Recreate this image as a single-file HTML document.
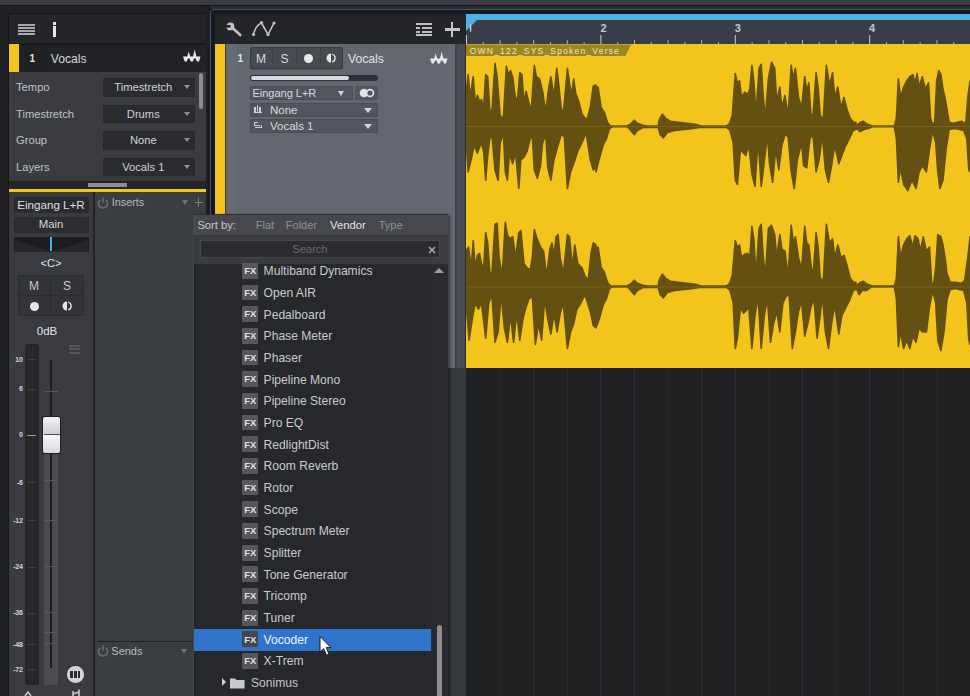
<!DOCTYPE html>
<html><head><meta charset="utf-8">
<style>
*{margin:0;padding:0;box-sizing:border-box}
html,body{width:970px;height:696px;overflow:hidden;background:#202124;font-family:"Liberation Sans",sans-serif;color:#d0d2d6}
.a{position:absolute}
.t{position:absolute;white-space:nowrap;line-height:1}
</style></head><body>
<div class="a" style="left:0px;top:0px;width:970px;height:5px;background:#3b3c41;"></div>
<div class="a" style="left:9px;top:14px;width:197px;height:682px;background:#3a3c41;box-shadow:0 0 0 1px #151618"></div>
<div class="a" style="left:9px;top:14px;width:197px;height:30px;background:#232528;"></div>
<div class="a" style="left:9px;top:43px;width:197px;height:2px;background:#18191b;"></div>
<div class="a" style="left:9px;top:45px;width:197px;height:27px;background:#222326;"></div>
<div class="a" style="left:19px;top:45px;width:28px;height:27px;background:#1f2022;"></div>
<div class="a" style="left:9px;top:44px;width:10px;height:28px;background:#f2c41c;"></div>
<div class="a" style="left:18px;top:24.0px;width:17px;height:2px;background:#a6a8ac;"></div>
<div class="a" style="left:18px;top:27.1px;width:17px;height:2px;background:#a6a8ac;"></div>
<div class="a" style="left:18px;top:30.2px;width:17px;height:2px;background:#a6a8ac;"></div>
<div class="a" style="left:18px;top:33.3px;width:17px;height:2px;background:#a6a8ac;"></div>
<div class="a" style="left:52.5px;top:22px;width:3px;height:2.5px;background:#e6e7ea;"></div>
<div class="a" style="left:52.5px;top:25.5px;width:3px;height:11px;background:#e6e7ea;"></div>
<div class="t" style="left:29.5px;top:53.7px;font-size:10px;color:#e2e4e8;font-weight:bold">1</div>
<div class="t" style="left:50.7px;top:53.14px;font-size:12.2px;color:#d4d6db;">Vocals</div>
<svg class="a" style="left:0;top:0" width="210" height="70" viewBox="0 0 210 70"><g transform="translate(-247,-2)" fill="#e8e9ec"><path d="M430,58.5 L434.2,58.5 L435.7,53.5 L437.2,58.5 L440,58.5 L441.7,51.5 L443.4,58.5 L447.5,58.5 L446,63.4 L444,63.4 L442.6,60.6 L441,60.6 L440,63.5 L437.6,63.5 L436.6,60.6 L435,60.6 L433.8,63.4 L431.7,63.4 Z"/></g></svg>
<div class="t" style="left:16px;top:81.82px;font-size:11.2px;color:#c0c2c7;">Tempo</div>
<div class="a" style="left:103px;top:78px;width:92px;height:18.5px;background:#2a2b2e;border-radius:2px;box-shadow:inset 0 0 0 1px #27282b"></div>
<div class="t" style="left:43.30000000000001px;width:200px;text-align:center;top:81.82px;font-size:11.2px;color:#cfd1d5;">Timestretch</div>
<div class="a" style="left:184px;top:85.0px;width:0;height:0;border-left:3.9px solid transparent;border-right:3.9px solid transparent;border-top:4.6px solid #909296"></div>
<div class="t" style="left:16px;top:108.52px;font-size:11.2px;color:#c0c2c7;">Timestretch</div>
<div class="a" style="left:103px;top:104.7px;width:92px;height:18.5px;background:#2a2b2e;border-radius:2px;box-shadow:inset 0 0 0 1px #27282b"></div>
<div class="t" style="left:43.30000000000001px;width:200px;text-align:center;top:108.52px;font-size:11.2px;color:#cfd1d5;">Drums</div>
<div class="a" style="left:184px;top:111.7px;width:0;height:0;border-left:3.9px solid transparent;border-right:3.9px solid transparent;border-top:4.6px solid #909296"></div>
<div class="t" style="left:16px;top:135.22px;font-size:11.2px;color:#c0c2c7;">Group</div>
<div class="a" style="left:103px;top:131.4px;width:92px;height:18.5px;background:#2a2b2e;border-radius:2px;box-shadow:inset 0 0 0 1px #27282b"></div>
<div class="t" style="left:43.30000000000001px;width:200px;text-align:center;top:135.22px;font-size:11.2px;color:#cfd1d5;">None</div>
<div class="a" style="left:184px;top:138.4px;width:0;height:0;border-left:3.9px solid transparent;border-right:3.9px solid transparent;border-top:4.6px solid #909296"></div>
<div class="t" style="left:16px;top:161.82px;font-size:11.2px;color:#c0c2c7;">Layers</div>
<div class="a" style="left:103px;top:158px;width:92px;height:18.5px;background:#2a2b2e;border-radius:2px;box-shadow:inset 0 0 0 1px #27282b"></div>
<div class="t" style="left:43.30000000000001px;width:200px;text-align:center;top:161.82px;font-size:11.2px;color:#cfd1d5;">Vocals 1</div>
<div class="a" style="left:184px;top:165.0px;width:0;height:0;border-left:3.9px solid transparent;border-right:3.9px solid transparent;border-top:4.6px solid #909296"></div>
<div class="a" style="left:199px;top:73px;width:4px;height:36px;background:#8c8e92;border-radius:2px"></div>
<div class="a" style="left:9px;top:176px;width:197px;height:5px;background:#37393e;"></div>
<div class="a" style="left:9px;top:181px;width:197px;height:8px;background:#232528;"></div>
<div class="a" style="left:88px;top:183px;width:39px;height:4px;background:#8b8e8e;"></div>
<div class="a" style="left:9px;top:189px;width:197px;height:3px;background:#f2c41c;"></div>
<div class="a" style="left:9px;top:192px;width:84px;height:504px;background:#393b40;"></div>
<div class="a" style="left:93px;top:192px;width:2px;height:504px;background:#232427;"></div>
<div class="a" style="left:95px;top:192px;width:111px;height:504px;background:#3a3e43;"></div>
<svg class="a" style="left:96px;top:196px" width="14" height="14" viewBox="0 0 14 14"><path d="M4.2,3.8 A4.6,4.6 0 1 0 9.8,3.8" fill="none" stroke="#6e7075" stroke-width="1.5"/><rect x="6.25" y="1.5" width="1.5" height="5" fill="#6e7075"/></svg>
<div class="t" style="left:111.8px;top:197.32px;font-size:10.8px;color:#b7b9be;">Inserts</div>
<div class="a" style="left:181.5px;top:200px;width:0;height:0;border-left:3.7px solid transparent;border-right:3.7px solid transparent;border-top:5.5px solid #6e7075"></div>
<div class="a" style="left:194.5px;top:201.5px;width:8px;height:1.6px;background:#7b7d82;"></div>
<div class="a" style="left:197.7px;top:198px;width:1.6px;height:8.5px;background:#7b7d82;"></div>
<div class="a" style="left:95px;top:641px;width:111px;height:1px;background:#222326;"></div>
<svg class="a" style="left:96px;top:644px" width="14" height="14" viewBox="0 0 14 14"><path d="M4.2,3.8 A4.6,4.6 0 1 0 9.8,3.8" fill="none" stroke="#6e7075" stroke-width="1.5"/><rect x="6.25" y="1.5" width="1.5" height="5" fill="#6e7075"/></svg>
<div class="t" style="left:111.3px;top:645.52px;font-size:11px;color:#b7b9be;">Sends</div>
<div class="a" style="left:181.3px;top:648.5px;width:0;height:0;border-left:3.7px solid transparent;border-right:3.7px solid transparent;border-top:5.5px solid #6e7075"></div>
<div class="a" style="left:13.5px;top:197.3px;width:75px;height:15.3px;background:#2a2b2e;border-radius:2px"></div>
<div class="t" style="left:-49px;width:200px;text-align:center;top:199.43px;font-size:11.6px;color:#dde0e4;">Eingang L+R</div>
<div class="a" style="left:13.5px;top:217px;width:75px;height:15.5px;background:#2c2d30;border-radius:2px"></div>
<div class="t" style="left:-49px;width:200px;text-align:center;top:219.23px;font-size:11.4px;color:#d4d6da;">Main</div>
<div class="a" style="left:13.5px;top:237px;width:75px;height:15px;background:#1b1c1e;border-radius:2px;overflow:hidden"></div>
<svg class="a" style="left:13.5px;top:237px" width="75" height="15" viewBox="0 0 75 15"><path d="M1,3 L37.5,15 L1,15 Z M74,3 L37.5,15 L74,15 Z" fill="#252628"/></svg>
<div class="a" style="left:50px;top:237.4px;width:2.4px;height:13.6px;background:#41b0f0;"></div>
<div class="t" style="left:-49px;width:200px;text-align:center;top:258.12px;font-size:11px;color:#dfe6ee;">&lt;C&gt;</div>
<div class="a" style="left:18px;top:275.3px;width:66px;height:40.7px;background:#323438;border-radius:2px;box-shadow:inset 0 0 0 1px #2a2b2e"></div>
<div class="a" style="left:50px;top:275.3px;width:1px;height:40.7px;background:#2a2b2e;"></div>
<div class="a" style="left:18px;top:295.3px;width:66px;height:1px;background:#2a2b2e;"></div>
<div class="t" style="left:-66px;width:200px;text-align:center;top:280.04px;font-size:12px;color:#c8cacf;">M</div>
<div class="t" style="left:-33px;width:200px;text-align:center;top:280.04px;font-size:12px;color:#c8cacf;">S</div>
<div class="a" style="left:29.5px;top:301.5px;width:9px;height:9px;border-radius:50%;background:#e6e7ea"></div>
<svg class="a" style="left:61px;top:300px" width="12" height="12" viewBox="0 0 12 12"><path d="M6,1.5 A4.5,4.5 0 0 0 6,10.5 Z" fill="#e6e7ea"/><path d="M7.2,2 A4.2,4.2 0 0 1 7.2,10" fill="none" stroke="#e6e7ea" stroke-width="1.3"/></svg>
<div class="t" style="left:-53px;width:200px;text-align:center;top:325.88px;font-size:11.5px;color:#e0e3e8;">0dB</div>
<div class="a" style="left:24.8px;top:344.3px;width:14px;height:340.3px;background:#242527;border-radius:3px"></div>
<div class="a" style="left:28.5px;top:346px;width:0.6px;height:336px;background:#2b2c2e;"></div>
<div class="a" style="left:32px;top:346px;width:0.6px;height:336px;background:#2b2c2e;"></div>
<div class="a" style="left:35.5px;top:346px;width:0.6px;height:336px;background:#2b2c2e;"></div>
<div class="a" style="left:43.5px;top:453px;width:14.5px;height:231.6px;background:#4a4c50;border-radius:0 0 2px 2px"></div>
<div class="a" style="left:50.3px;top:359.8px;width:1.6px;height:308px;background:#1c1d1f;"></div>
<div class="a" style="left:44px;top:391px;width:13.5px;height:1px;background:#58595d;"></div>
<div class="a" style="left:44px;top:480px;width:13.5px;height:1px;background:#58595d;"></div>
<div class="a" style="left:44px;top:519.5px;width:13.5px;height:1px;background:#58595d;"></div>
<div class="a" style="left:44px;top:566px;width:13.5px;height:1px;background:#58595d;"></div>
<div class="a" style="left:44px;top:611.5px;width:13.5px;height:1px;background:#58595d;"></div>
<div class="a" style="left:44px;top:631.5px;width:13.5px;height:1px;background:#58595d;"></div>
<div class="a" style="left:44px;top:643px;width:13.5px;height:1px;background:#58595d;"></div>
<div class="t" style="left:-177.5px;width:200px;text-align:right;top:355.64px;font-size:7px;color:#d2d4d8;font-weight:bold;letter-spacing:-0.3px">10</div>
<div class="a" style="left:27px;top:359px;width:9px;height:1px;background:#3a3b3e;"></div>
<div class="t" style="left:-177.5px;width:200px;text-align:right;top:385.14px;font-size:7px;color:#d2d4d8;font-weight:bold;letter-spacing:-0.3px">6</div>
<div class="a" style="left:27px;top:388.5px;width:9px;height:1px;background:#3a3b3e;"></div>
<div class="t" style="left:-177.5px;width:200px;text-align:right;top:431.44px;font-size:7px;color:#d2d4d8;font-weight:bold;letter-spacing:-0.3px">0</div>
<div class="a" style="left:27px;top:434.8px;width:9px;height:1px;background:#9a9ca0;"></div>
<div class="t" style="left:-177.5px;width:200px;text-align:right;top:478.64px;font-size:7px;color:#d2d4d8;font-weight:bold;letter-spacing:-0.3px">-6</div>
<div class="a" style="left:27px;top:482px;width:9px;height:1px;background:#3a3b3e;"></div>
<div class="t" style="left:-177.5px;width:200px;text-align:right;top:516.64px;font-size:7px;color:#d2d4d8;font-weight:bold;letter-spacing:-0.3px">-12</div>
<div class="a" style="left:27px;top:520px;width:9px;height:1px;background:#3a3b3e;"></div>
<div class="t" style="left:-177.5px;width:200px;text-align:right;top:563.44px;font-size:7px;color:#d2d4d8;font-weight:bold;letter-spacing:-0.3px">-24</div>
<div class="a" style="left:27px;top:566.8px;width:9px;height:1px;background:#3a3b3e;"></div>
<div class="t" style="left:-177.5px;width:200px;text-align:right;top:609.34px;font-size:7px;color:#d2d4d8;font-weight:bold;letter-spacing:-0.3px">-36</div>
<div class="a" style="left:27px;top:612.7px;width:9px;height:1px;background:#3a3b3e;"></div>
<div class="t" style="left:-177.5px;width:200px;text-align:right;top:640.64px;font-size:7px;color:#d2d4d8;font-weight:bold;letter-spacing:-0.3px">-48</div>
<div class="a" style="left:27px;top:644px;width:9px;height:1px;background:#3a3b3e;"></div>
<div class="t" style="left:-177.5px;width:200px;text-align:right;top:665.64px;font-size:7px;color:#d2d4d8;font-weight:bold;letter-spacing:-0.3px">-72</div>
<div class="a" style="left:27px;top:669px;width:9px;height:1px;background:#3a3b3e;"></div>
<div class="a" style="left:42.9px;top:416.7px;width:17.3px;height:36.3px;border-radius:2px;background:linear-gradient(#f4f4f5,#cfd0d2 45%,#f7f7f8 50%,#d8d9db);box-shadow:0 0 0 1px #1e1f21"></div>
<div class="a" style="left:43.5px;top:434.3px;width:16px;height:1.2px;background:#4a4b4e;"></div>
<div class="a" style="left:69px;top:344.5px;width:11px;height:2.3px;background:#55575b;"></div>
<div class="a" style="left:69px;top:348.1px;width:11px;height:2.3px;background:#55575b;"></div>
<div class="a" style="left:69px;top:351.7px;width:11px;height:2.3px;background:#55575b;"></div>
<div class="a" style="left:67px;top:666px;width:16.5px;height:16.5px;border-radius:50%;background:#d3d4d6"></div>
<div class="a" style="left:70.3px;top:670.5px;width:2.6px;height:7.5px;background:#2a2b2e;"></div>
<div class="a" style="left:74px;top:670.5px;width:2.6px;height:7.5px;background:#2a2b2e;"></div>
<div class="a" style="left:77.7px;top:670.5px;width:2.6px;height:7.5px;background:#2a2b2e;"></div>
<svg class="a" style="left:20px;top:686px" width="70" height="10" viewBox="20 686 70 10"><path d="M25,696 L28,692 L31,696" fill="none" stroke="#c7c9cd" stroke-width="1.6"/><path d="M73,691 L73,696 M79,689.5 L79,696 M73,694 L79,692" fill="none" stroke="#c7c9cd" stroke-width="1.6"/></svg>
<div class="a" style="left:0px;top:4.5px;width:970px;height:1.5px;background:#141517;"></div>
<div class="a" style="left:206px;top:6px;width:764px;height:3px;background:#2b2c30;"></div>
<div class="a" style="left:206px;top:6px;width:4px;height:690px;background:#1e1f22;"></div>
<div class="a" style="left:210px;top:9px;width:780px;height:700px;border:1px solid #3f5670;border-radius:5px;background:#161a1f"></div>
<div class="a" style="left:215px;top:14px;width:251px;height:30px;background:#232528;"></div>
<div class="a" style="left:215px;top:44px;width:10px;height:324px;background:#f2c41c;"></div>
<div class="a" style="left:225px;top:44px;width:1px;height:324px;background:#3b3d40;"></div>
<div class="a" style="left:226px;top:44px;width:229px;height:324px;background:#62666e;"></div>
<div class="a" style="left:226px;top:44px;width:11px;height:324px;background:#666a72;"></div>
<div class="a" style="left:448px;top:44px;width:7px;height:324px;background:#666a73;"></div>
<div class="a" style="left:455px;top:44px;width:11px;height:324px;background:#484c54;"></div>
<div class="a" style="left:455px;top:44px;width:1.5px;height:324px;background:#3e4149;"></div>
<div class="a" style="left:465px;top:44px;width:1px;height:324px;background:#2b2d2a;"></div>
<div class="a" style="left:448px;top:368px;width:18px;height:328px;background:#35383c;"></div>
<svg class="a" style="left:224px;top:18px" width="60" height="24" viewBox="224 18 60 24"><path d="M232.5,28 L240.3,35" fill="none" stroke="#c0c2c6" stroke-width="2.6" stroke-linecap="round"/><circle cx="230.4" cy="26.4" r="3.9" fill="#c0c2c6"/><rect x="225.5" y="25" width="5" height="2.6" fill="#232528"/><path d="M253.5,34.5 Q255.5,25.5 261.5,23 L268,34.5 L274,23" fill="none" stroke="#c0c2c6" stroke-width="1.6"/><circle cx="253.5" cy="34.5" r="1.6" fill="#c0c2c6"/><circle cx="261.5" cy="22.5" r="1.6" fill="#c0c2c6"/><circle cx="268" cy="34.5" r="1.6" fill="#c0c2c6"/><circle cx="274" cy="23" r="1.6" fill="#c0c2c6"/></svg>
<div class="a" style="left:416px;top:22.5px;width:16px;height:2.4px;background:#bdbfc3;"></div>
<div class="a" style="left:416px;top:26.7px;width:4px;height:2.4px;background:#bdbfc3;"></div>
<div class="a" style="left:422px;top:26.7px;width:10px;height:2.4px;background:#bdbfc3;"></div>
<div class="a" style="left:416px;top:31px;width:4px;height:2.4px;background:#bdbfc3;"></div>
<div class="a" style="left:422px;top:31px;width:10px;height:2.4px;background:#bdbfc3;"></div>
<div class="a" style="left:416px;top:33.5px;width:16px;height:2.2px;background:#bdbfc3;"></div>
<div class="a" style="left:444.6px;top:28px;width:15px;height:2.6px;background:#c4c6ca;"></div>
<div class="a" style="left:450.8px;top:21.6px;width:2.6px;height:15.2px;background:#c4c6ca;"></div>
<div class="t" style="left:237.5px;top:53.7px;font-size:10px;color:#e2e4e8;font-weight:bold">1</div>
<div class="a" style="left:249.6px;top:47px;width:93.2px;height:22.4px;background:#474a50;border-radius:3px;box-shadow:inset 0 0 0 1px #3a3c41, 0 1px 0 #55585e"></div>
<div class="a" style="left:272px;top:48px;width:1px;height:20.4px;background:#3f4247;"></div>
<div class="a" style="left:296.4px;top:48px;width:1px;height:20.4px;background:#3f4247;"></div>
<div class="a" style="left:319.6px;top:48px;width:1px;height:20.4px;background:#3f4247;"></div>
<div class="t" style="left:161px;width:200px;text-align:center;top:52.74px;font-size:12px;color:#d7d9dd;">M</div>
<div class="t" style="left:184.5px;width:200px;text-align:center;top:52.74px;font-size:12px;color:#d7d9dd;">S</div>
<div class="a" style="left:303.5px;top:53.5px;width:9px;height:9px;border-radius:50%;background:#e8e9eb"></div>
<svg class="a" style="left:325px;top:52px" width="12" height="12" viewBox="0 0 12 12"><path d="M6,1.5 A4.5,4.5 0 0 0 6,10.5 Z" fill="#e8e9eb"/><path d="M7.2,2 A4.2,4.2 0 0 1 7.2,10" fill="none" stroke="#e8e9eb" stroke-width="1.3"/></svg>
<div class="t" style="left:348px;top:53.44px;font-size:12.2px;color:#e0e2e6;">Vocals</div>
<svg class="a" style="left:428px;top:50px" width="20" height="17" viewBox="428 50 20 17"><path fill="#e8e9ec" d="M430,58.5 L434.2,58.5 L435.7,53.5 L437.2,58.5 L440,58.5 L441.7,51.5 L443.4,58.5 L447.5,58.5 L446,63.4 L444,63.4 L442.6,60.6 L441,60.6 L440,63.5 L437.6,63.5 L436.6,60.6 L435,60.6 L433.8,63.4 L431.7,63.4 Z"/></svg>
<div class="a" style="left:249.6px;top:74.8px;width:128.4px;height:6.2px;background:#2e3034;border-radius:3px"></div>
<div class="a" style="left:250.5px;top:75.6px;width:98px;height:4.6px;background:#d8d9db;border-radius:2.5px"></div>
<div class="a" style="left:249.6px;top:85.6px;width:103.3px;height:14.4px;background:#52555b;border-radius:2px;box-shadow:inset 0 0 0 1px #4a4d52"></div>
<div class="t" style="left:252.4px;top:87.72px;font-size:11px;color:#d8dadd;">Eingang L+R</div>
<div class="a" style="left:338px;top:90.5px;width:0;height:0;border-left:3.7px solid transparent;border-right:3.7px solid transparent;border-top:5px solid #d0d2d5"></div>
<div class="a" style="left:355px;top:85.6px;width:23px;height:14.4px;background:#52555b;border-radius:2px"></div>
<svg class="a" style="left:357px;top:86px" width="20" height="14" viewBox="0 0 20 14"><circle cx="7" cy="7" r="4.3" fill="#e4e5e7"/><circle cx="13" cy="7" r="4.3" fill="#e4e5e7"/><circle cx="13" cy="7" r="2.6" fill="#52555b"/></svg>
<div class="a" style="left:249.6px;top:102.6px;width:128.4px;height:14.3px;background:#52555b;border-radius:2px;box-shadow:inset 0 0 0 1px #4a4d52"></div>
<div class="t" style="left:270px;top:104.58px;font-size:11.5px;color:#d8dadd;">None</div>
<div class="a" style="left:363.5px;top:107.6px;width:0;height:0;border-left:4px solid transparent;border-right:4px solid transparent;border-top:5px solid #d0d2d5"></div>
<div class="a" style="left:249.6px;top:118.9px;width:128.4px;height:14.3px;background:#52555b;border-radius:2px;box-shadow:inset 0 0 0 1px #4a4d52"></div>
<div class="t" style="left:270px;top:120.88px;font-size:11.5px;color:#d8dadd;">Vocals 1</div>
<div class="a" style="left:363.5px;top:123.9px;width:0;height:0;border-left:4px solid transparent;border-right:4px solid transparent;border-top:5px solid #d0d2d5"></div>
<div class="a" style="left:254px;top:106.5px;width:1.5px;height:6px;background:#cfd1d4;"></div>
<div class="a" style="left:256.5px;top:105px;width:1.5px;height:7.5px;background:#cfd1d4;"></div>
<div class="a" style="left:259px;top:107px;width:1.5px;height:5.5px;background:#cfd1d4;"></div>
<div class="a" style="left:253.5px;top:112px;width:8px;height:1px;background:#cfd1d4;"></div>
<div class="a" style="left:254px;top:121.5px;width:4px;height:1.2px;background:#cfd1d4;"></div>
<div class="a" style="left:254px;top:121.5px;width:1.2px;height:4px;background:#cfd1d4;"></div>
<div class="a" style="left:254px;top:124.5px;width:6px;height:1.2px;background:#cfd1d4;"></div>
<div class="a" style="left:255px;top:127px;width:7px;height:1.2px;background:#cfd1d4;"></div>
<div class="a" style="left:261px;top:125px;width:1.2px;height:3px;background:#cfd1d4;"></div>
<svg class="a" style="left:0;top:0" width="970" height="696" viewBox="0 0 970 696">
<defs><clipPath id="arrclip"><rect x="466" y="14" width="504" height="682"/></clipPath></defs>
<g clip-path="url(#arrclip)">
<rect x="466" y="14" width="504" height="682" fill="#1f2022"/>
<rect x="499.6" y="368" width="1" height="328" fill="#2c2e31"/><rect x="533.2" y="368" width="1" height="328" fill="#2c2e31"/><rect x="566.8" y="368" width="1" height="328" fill="#2c2e31"/><rect x="600.4" y="368" width="1" height="328" fill="#323438"/><rect x="634.0" y="368" width="1" height="328" fill="#2c2e31"/><rect x="667.6" y="368" width="1" height="328" fill="#2c2e31"/><rect x="701.2" y="368" width="1" height="328" fill="#2c2e31"/><rect x="734.8" y="368" width="1" height="328" fill="#323438"/><rect x="768.4" y="368" width="1" height="328" fill="#2c2e31"/><rect x="802.0" y="368" width="1" height="328" fill="#2c2e31"/><rect x="835.6" y="368" width="1" height="328" fill="#2c2e31"/><rect x="869.2" y="368" width="1" height="328" fill="#323438"/><rect x="902.8" y="368" width="1" height="328" fill="#2c2e31"/><rect x="936.4" y="368" width="1" height="328" fill="#2c2e31"/><rect x="970.0" y="368" width="1" height="328" fill="#2c2e31"/>
<rect x="466" y="20" width="504" height="24" fill="#393d47"/>
<path d="M466,14 L970,14 L970,20 L477,20 L466,31 Z" fill="#4db1ea"/>
<rect x="466.0" y="35" width="1" height="9" fill="#c8cad0"/><rect x="482.8" y="42" width="1" height="2" fill="#aeb1b8"/><rect x="499.6" y="40.2" width="1" height="3.8" fill="#aeb1b8"/><rect x="516.4" y="42" width="1" height="2" fill="#aeb1b8"/><rect x="533.2" y="40.2" width="1" height="3.8" fill="#aeb1b8"/><rect x="550.0" y="42" width="1" height="2" fill="#aeb1b8"/><rect x="566.8" y="40.2" width="1" height="3.8" fill="#aeb1b8"/><rect x="583.6" y="42" width="1" height="2" fill="#aeb1b8"/><rect x="600.4" y="35" width="1" height="9" fill="#c8cad0"/><rect x="617.2" y="42" width="1" height="2" fill="#aeb1b8"/><rect x="634.0" y="40.2" width="1" height="3.8" fill="#aeb1b8"/><rect x="650.8" y="42" width="1" height="2" fill="#aeb1b8"/><rect x="667.6" y="40.2" width="1" height="3.8" fill="#aeb1b8"/><rect x="684.4" y="42" width="1" height="2" fill="#aeb1b8"/><rect x="701.2" y="40.2" width="1" height="3.8" fill="#aeb1b8"/><rect x="718.0" y="42" width="1" height="2" fill="#aeb1b8"/><rect x="734.8" y="35" width="1" height="9" fill="#c8cad0"/><rect x="751.6" y="42" width="1" height="2" fill="#aeb1b8"/><rect x="768.4" y="40.2" width="1" height="3.8" fill="#aeb1b8"/><rect x="785.2" y="42" width="1" height="2" fill="#aeb1b8"/><rect x="802.0" y="40.2" width="1" height="3.8" fill="#aeb1b8"/><rect x="818.8" y="42" width="1" height="2" fill="#aeb1b8"/><rect x="835.6" y="40.2" width="1" height="3.8" fill="#aeb1b8"/><rect x="852.4" y="42" width="1" height="2" fill="#aeb1b8"/><rect x="869.2" y="35" width="1" height="9" fill="#c8cad0"/><rect x="886.0" y="42" width="1" height="2" fill="#aeb1b8"/><rect x="902.8" y="40.2" width="1" height="3.8" fill="#aeb1b8"/><rect x="919.6" y="42" width="1" height="2" fill="#aeb1b8"/><rect x="936.4" y="40.2" width="1" height="3.8" fill="#aeb1b8"/><rect x="953.2" y="42" width="1" height="2" fill="#aeb1b8"/><rect x="970.0" y="40.2" width="1" height="3.8" fill="#aeb1b8"/>
<rect x="469.8" y="24.4" width="1.5" height="7.2" fill="#c8cad0"/>
<text x="600.6" y="31.8" font-size="11" font-weight="bold" fill="#c4c7ce" font-family="Liberation Sans">2</text>
<text x="734.8" y="31.8" font-size="11" font-weight="bold" fill="#c4c7ce" font-family="Liberation Sans">3</text>
<text x="869" y="31.8" font-size="11" font-weight="bold" fill="#c4c7ce" font-family="Liberation Sans">4</text>
<rect x="466" y="44" width="504" height="324" fill="#f2c41c"/>
<path d="M466,44.6 L631.3,44.6 L625.2,56.1 L466,56.1 Z" fill="#9c8623"/>
<text x="469.8" y="54.2" font-size="8.5" letter-spacing="1.2" fill="#f2e6b8" font-family="Liberation Sans">OWN_122_SYS_Spoken_Verse</text>
<path id="wv" d="M466,126.5 L466.0,93.3 L468.1,74.6 L470.1,97.4 L473.2,76.7 L475.3,103.6 L477.4,95.3 L479.5,101.5 L481.5,99.5 L483.6,107.8 L485.7,74.6 L487.7,76.7 L489.8,109.8 L491.9,111.9 L495.0,63.2 L497.1,76.7 L500.2,116.0 L503.3,118.1 L506.4,66.4 L508.4,74.6 L510.5,70.5 L512.6,76.7 L515.7,99.5 L517.8,97.4 L519.8,72.6 L521.9,74.6 L524.0,103.6 L526.0,91.2 L528.1,99.5 L531.2,111.9 L534.3,65.3 L536.4,76.7 L539.5,78.8 L542.6,91.2 L545.7,111.9 L548.8,87.1 L550.9,76.7 L554.0,97.4 L556.7,68.4 L558.1,78.8 L561.2,107.8 L563.3,114.0 L567.4,68.4 L569.5,82.9 L571.6,95.3 L573.7,78.8 L575.7,93.3 L578.8,101.5 L581.9,114.0 L585.0,118.1 L587.1,119.1 L590.2,107.8 L593.3,86.0 L596.0,85.0 L596.0,87.1 L598.1,87.1 L601.2,107.8 L604.3,111.9 L607.4,122.3 L610.5,126.0 L627.1,126.0 L630.2,124.3 L634.3,120.2 L637.4,123.3 L643.6,125.4 L646.7,126.0 L658.1,126.0 L659.1,120.2 L662.3,114.0 L665.4,118.1 L670.5,121.2 L678.8,122.3 L687.1,123.3 L695.4,124.3 L699.5,125.4 L701.6,126.0 L726.0,126.0 L726.0,126.0 L729.1,124.3 L732.2,116.0 L735.3,73.6 L737.4,82.9 L739.5,80.8 L741.5,97.4 L744.6,92.2 L747.7,94.3 L749.8,89.1 L751.9,65.3 L754.0,82.9 L756.0,114.0 L759.1,68.4 L761.2,64.3 L763.3,97.4 L765.3,118.1 L768.4,78.8 L771.5,62.2 L774.7,68.4 L776.7,101.5 L779.8,87.1 L781.9,107.8 L785.0,95.3 L788.1,116.0 L791.2,65.3 L793.3,78.8 L795.4,68.4 L798.5,97.4 L801.6,107.8 L804.7,76.7 L806.7,91.2 L808.8,82.9 L810.9,114.0 L813.0,116.0 L816.1,72.6 L818.1,87.1 L820.2,116.0 L823.3,118.1 L826.4,65.3 L829.5,85.0 L832.6,72.6 L834.7,97.4 L837.8,87.1 L840.9,107.8 L844.0,97.4 L847.1,109.8 L850.2,118.1 L853.3,122.3 L856.0,122.3 L856.0,126.0 L859.1,123.3 L863.2,121.2 L867.4,124.3 L872.6,126.0 L894.3,126.0 L896.4,118.1 L898.4,78.8 L900.5,97.4 L903.6,87.1 L906.7,80.8 L909.8,76.7 L912.9,74.6 L915.0,82.9 L917.1,73.6 L919.1,87.1 L922.3,76.7 L925.4,89.1 L928.5,82.9 L930.5,118.1 L932.6,124.3 L934.7,122.3 L936.7,80.8 L938.8,70.5 L940.9,74.6 L943.0,89.1 L945.0,97.4 L947.1,109.8 L949.2,122.3 L953.3,123.3 L957.4,122.3 L961.6,121.2 L965.7,124.3 L967.8,97.4 L970.1,80.8 L971.0,80.8 L971,126.5 L971.0,171.9 L970.1,171.9 L968.8,169.9 L966.8,138.8 L963.7,130.5 L955.4,128.5 L949.2,129.5 L946.1,149.2 L943.0,180.2 L939.9,188.5 L937.8,171.9 L935.7,143.0 L932.6,130.5 L929.5,149.2 L926.4,171.9 L922.3,165.7 L919.1,171.9 L916.0,188.5 L911.9,180.2 L907.8,190.6 L903.6,184.4 L900.5,167.8 L898.4,182.3 L896.4,138.8 L894.3,126.8 L872.6,126.8 L868.4,128.5 L864.3,129.5 L860.1,131.6 L856.0,127.4 L856.0,129.5 L853.3,130.5 L849.2,138.8 L845.0,147.1 L841.9,155.4 L838.8,163.7 L834.7,145.0 L831.6,165.7 L828.5,182.3 L825.4,169.9 L822.3,134.7 L819.2,159.5 L816.1,171.9 L813.0,134.7 L809.9,138.8 L806.7,167.8 L803.6,165.7 L801.6,143.0 L797.4,159.5 L794.3,188.5 L791.2,171.9 L788.1,136.7 L785.0,134.7 L781.9,145.0 L778.8,169.9 L775.7,149.2 L772.6,182.3 L769.5,163.7 L767.4,134.7 L764.3,161.6 L761.2,186.4 L758.1,138.8 L755.0,186.4 L751.9,174.0 L748.8,145.0 L745.7,155.4 L743.6,153.3 L740.5,149.2 L737.4,184.4 L735.3,180.2 L733.2,143.0 L730.1,130.5 L726.0,126.8 L726.0,127.4 L699.5,127.4 L693.3,128.5 L685.0,129.5 L674.7,130.5 L667.4,132.6 L663.3,137.8 L660.2,134.7 L658.1,127.4 L643.6,127.4 L637.4,130.5 L634.3,134.7 L629.1,128.5 L627.1,126.8 L612.6,126.8 L609.5,128.5 L606.4,138.8 L603.2,145.0 L599.1,159.5 L596.0,171.9 L596.0,167.8 L593.3,169.9 L590.2,159.5 L586.1,132.6 L581.9,143.0 L577.8,151.2 L573.7,163.7 L570.6,171.9 L567.4,188.5 L564.3,136.7 L561.2,134.7 L558.1,145.0 L554.0,159.5 L550.9,180.2 L547.8,167.8 L545.7,134.7 L542.6,143.0 L540.5,165.7 L537.4,178.2 L534.3,169.9 L532.3,136.7 L530.2,138.8 L527.1,151.2 L524.0,157.4 L520.9,159.5 L518.8,188.5 L515.7,153.3 L512.6,163.7 L509.5,153.3 L507.4,180.2 L505.3,171.9 L503.3,132.6 L500.2,143.0 L498.1,180.2 L495.0,169.9 L491.9,134.7 L489.8,138.8 L487.7,155.4 L485.7,180.2 L483.6,151.2 L481.5,143.0 L479.5,147.1 L477.4,153.3 L474.3,145.0 L471.2,159.5 L468.1,171.9 L466.0,138.8 Z" fill="#645112" stroke="#645112" stroke-width="1.6" stroke-linejoin="round"/>
<path d="M466,286.4 L466.0,251.2 L468.5,247.1 L471.2,267.8 L473.2,240.8 L475.3,267.8 L477.4,255.3 L479.5,253.3 L481.5,263.6 L483.6,269.8 L485.7,232.6 L487.7,242.9 L489.8,271.9 L491.9,274.0 L495.0,224.3 L497.1,223.2 L499.1,257.4 L502.2,276.0 L505.3,222.2 L507.4,234.6 L509.5,238.8 L512.6,236.7 L515.7,257.4 L518.8,232.6 L520.9,230.5 L524.0,263.6 L527.1,267.8 L530.2,269.8 L532.3,257.4 L534.3,229.5 L536.4,236.7 L540.5,247.1 L543.6,251.2 L546.7,276.0 L549.9,249.1 L551.9,242.9 L554.0,255.3 L556.1,236.7 L558.1,234.6 L560.2,257.4 L563.3,274.0 L567.4,234.6 L569.5,236.7 L572.6,267.8 L574.7,245.0 L577.8,263.6 L581.9,267.8 L585.0,276.0 L588.2,280.2 L591.3,251.2 L593.3,242.9 L596.0,245.0 L596.0,249.1 L598.1,247.1 L601.2,267.8 L604.3,271.9 L607.4,282.3 L610.5,286.0 L627.1,286.0 L630.2,284.3 L634.3,280.2 L637.4,283.3 L643.6,285.4 L646.7,286.0 L658.1,286.0 L659.1,280.2 L662.3,274.0 L665.4,278.1 L670.5,281.2 L678.8,282.3 L687.1,283.3 L695.4,284.3 L699.5,285.4 L701.6,286.0 L726.0,286.0 L726.0,286.0 L729.1,284.3 L732.2,276.0 L735.3,240.8 L737.4,247.1 L739.5,245.0 L741.5,257.4 L744.6,254.3 L747.7,253.3 L749.8,257.4 L751.9,226.4 L754.0,240.8 L756.0,276.0 L759.1,228.4 L761.2,224.3 L763.3,257.4 L765.3,276.0 L768.4,228.4 L771.5,225.3 L774.7,234.6 L776.7,257.4 L779.8,234.6 L781.9,249.1 L785.0,251.2 L788.1,276.0 L791.2,225.3 L793.3,242.9 L795.4,236.7 L798.5,257.4 L801.6,269.8 L804.7,226.4 L806.7,242.9 L808.8,245.0 L810.9,263.6 L813.0,278.1 L816.1,232.6 L818.1,247.1 L820.2,278.1 L823.3,280.2 L826.4,224.3 L829.5,242.9 L832.6,238.8 L834.7,257.4 L837.8,245.0 L840.9,257.4 L844.0,255.3 L847.1,265.7 L850.2,278.1 L853.3,282.3 L856.0,282.3 L856.0,286.0 L859.1,283.3 L863.2,281.2 L867.4,284.3 L872.6,286.0 L894.3,286.0 L896.4,278.1 L898.4,236.7 L900.5,257.4 L903.6,245.0 L906.7,238.8 L909.8,235.7 L912.9,247.1 L915.0,235.7 L918.1,238.8 L920.2,251.2 L923.3,236.7 L926.4,251.2 L929.5,247.1 L931.6,282.3 L933.6,284.3 L935.7,267.8 L937.8,234.6 L940.9,236.7 L943.0,245.0 L945.0,257.4 L947.1,274.0 L950.2,282.3 L955.4,282.3 L961.6,283.3 L964.7,280.2 L967.8,257.4 L970.1,236.7 L971.0,236.7 L971,286.4 L971.0,344.4 L970.1,344.4 L968.8,340.2 L966.8,303.0 L963.7,290.5 L955.4,288.5 L950.2,289.5 L947.1,298.8 L944.0,331.9 L940.9,350.6 L937.8,340.2 L935.7,303.0 L932.6,290.5 L929.5,307.1 L926.4,331.9 L922.3,331.9 L919.1,327.8 L916.0,342.3 L912.9,336.1 L909.8,348.5 L906.7,340.2 L903.6,348.5 L900.5,331.9 L898.4,346.4 L896.4,298.8 L894.3,286.8 L872.6,286.8 L870.5,287.4 L866.4,290.5 L862.2,290.5 L859.1,294.7 L856.0,287.4 L856.0,289.5 L853.3,290.5 L850.2,298.8 L846.1,307.1 L841.9,315.4 L838.8,334.0 L834.7,305.0 L831.6,323.7 L828.5,348.5 L825.4,331.9 L822.3,294.7 L820.2,315.4 L817.1,338.2 L814.0,298.8 L810.9,307.1 L807.8,323.7 L804.7,336.1 L801.6,300.9 L798.5,311.2 L795.4,331.9 L792.3,348.5 L789.1,294.7 L786.0,296.7 L782.9,303.0 L779.8,331.9 L776.7,311.2 L773.6,323.7 L770.5,342.3 L767.4,298.8 L764.3,315.4 L761.2,348.5 L758.1,296.7 L755.0,315.4 L751.9,348.5 L748.8,307.1 L745.7,311.2 L743.6,313.3 L740.5,307.1 L737.4,338.2 L735.3,348.5 L733.2,303.0 L730.1,290.5 L726.0,286.8 L726.0,287.4 L699.5,287.4 L693.3,288.5 L685.0,289.5 L674.7,290.5 L667.4,292.6 L663.3,297.8 L660.2,294.7 L658.1,287.4 L643.6,287.4 L637.4,290.5 L634.3,294.7 L629.1,288.5 L627.1,286.8 L612.6,286.8 L609.5,288.5 L606.4,298.8 L603.2,305.0 L599.1,319.5 L596.0,327.8 L596.0,327.8 L593.3,325.7 L590.2,311.2 L585.0,294.7 L580.9,303.0 L576.8,309.2 L573.7,323.7 L570.6,331.9 L567.4,348.5 L563.3,303.0 L560.2,313.3 L557.1,331.9 L554.0,313.3 L550.9,334.0 L547.8,319.5 L544.7,298.8 L541.6,340.2 L538.5,323.7 L535.4,344.4 L532.3,296.7 L529.1,298.8 L526.0,307.1 L522.9,319.5 L519.8,340.2 L516.7,313.3 L513.6,342.3 L510.5,315.4 L507.4,342.3 L504.3,327.8 L501.2,294.7 L498.1,331.9 L495.0,342.3 L491.9,294.7 L488.8,303.0 L485.7,338.2 L481.5,303.0 L478.4,309.2 L475.3,303.0 L472.2,319.5 L469.1,340.2 L466.0,303.0 Z" fill="#645112" stroke="#645112" stroke-width="1.6" stroke-linejoin="round"/>
<rect x="466" y="126" width="504" height="1" fill="#7a6418"/>
<rect x="466" y="286.5" width="504" height="1" fill="#7a6418"/>
</g>
</svg>
<div class="a" style="left:194px;top:214.5px;width:254px;height:482px;background:#27282c;box-shadow:-1px 0 0 #45464b, 2px 0 3px rgba(0,0,0,.45)"></div>
<div class="a" style="left:194px;top:264px;width:1.5px;height:432px;background:#202124;"></div>
<div class="a" style="left:193px;top:213.5px;width:255px;height:1px;background:#2d2e31;"></div>
<div class="a" style="left:194px;top:214.5px;width:254px;height:20px;background:#46484d;"></div>
<div class="a" style="left:194px;top:234.5px;width:254px;height:29px;background:#3a3b3f;"></div>
<div class="a" style="left:199.7px;top:240.3px;width:240.3px;height:18px;background:#2b2c30;box-shadow:inset 0 0 0 1px #46474b"></div>
<div class="t" style="left:197.4px;top:219.62px;font-size:11.2px;color:#c6c8cc;">Sort by:</div>
<div class="t" style="left:255.8px;top:219.72px;font-size:11px;color:#8e9095;">Flat</div>
<div class="t" style="left:285.8px;top:219.72px;font-size:11px;color:#8e9095;">Folder</div>
<div class="t" style="left:330px;top:219.58px;font-size:11.3px;color:#e0e2e6;">Vendor</div>
<div class="t" style="left:378.7px;top:219.72px;font-size:11px;color:#8e9095;">Type</div>
<div class="t" style="left:210px;width:200px;text-align:center;top:244.22px;font-size:11px;color:#67696d;">Search</div>
<svg class="a" style="left:427.5px;top:246px" width="8" height="8" viewBox="0 0 8 8"><path d="M1,1 L7,7 M7,1 L1,7" stroke="#a9abaf" stroke-width="1.5"/></svg>
<div class="a" style="left:431px;top:264px;width:17px;height:432px;background:#2a2b2f;"></div>
<div class="a" style="left:434.4px;top:268.4px;width:0;height:0;border-left:5px solid transparent;border-right:5px solid transparent;border-bottom:5.5px solid #9a9ca0"></div>
<div class="a" style="left:436.7px;top:625px;width:5.3px;height:80px;background:#8c8e92;border-radius:2.5px"></div>
<div class="a" style="left:242.3px;top:263.0px;width:15.8px;height:15.8px;background:#56575a;border-radius:1px"></div>
<div class="t" style="left:263.6px;top:265.39px;font-size:12.1px;color:#c9cbcf;">Multiband Dynamics</div>
<div class="t" style="left:150.3px;width:200px;text-align:center;top:266.14px;font-size:9.5px;color:#e2e2e2;font-weight:bold;letter-spacing:0.1px">FX</div>
<div class="a" style="left:242.3px;top:284.67px;width:15.8px;height:15.8px;background:#56575a;border-radius:1px"></div>
<div class="t" style="left:263.6px;top:287.06px;font-size:12.1px;color:#c9cbcf;">Open AIR</div>
<div class="t" style="left:150.3px;width:200px;text-align:center;top:287.81px;font-size:9.5px;color:#e2e2e2;font-weight:bold;letter-spacing:0.1px">FX</div>
<div class="a" style="left:242.3px;top:306.34px;width:15.8px;height:15.8px;background:#56575a;border-radius:1px"></div>
<div class="t" style="left:263.6px;top:308.73px;font-size:12.1px;color:#c9cbcf;">Pedalboard</div>
<div class="t" style="left:150.3px;width:200px;text-align:center;top:309.48px;font-size:9.5px;color:#e2e2e2;font-weight:bold;letter-spacing:0.1px">FX</div>
<div class="a" style="left:242.3px;top:328.01px;width:15.8px;height:15.8px;background:#56575a;border-radius:1px"></div>
<div class="t" style="left:263.6px;top:330.4px;font-size:12.1px;color:#c9cbcf;">Phase Meter</div>
<div class="t" style="left:150.3px;width:200px;text-align:center;top:331.15px;font-size:9.5px;color:#e2e2e2;font-weight:bold;letter-spacing:0.1px">FX</div>
<div class="a" style="left:242.3px;top:349.68px;width:15.8px;height:15.8px;background:#56575a;border-radius:1px"></div>
<div class="t" style="left:263.6px;top:352.07px;font-size:12.1px;color:#c9cbcf;">Phaser</div>
<div class="t" style="left:150.3px;width:200px;text-align:center;top:352.82px;font-size:9.5px;color:#e2e2e2;font-weight:bold;letter-spacing:0.1px">FX</div>
<div class="a" style="left:242.3px;top:371.35px;width:15.8px;height:15.8px;background:#56575a;border-radius:1px"></div>
<div class="t" style="left:263.6px;top:373.74px;font-size:12.1px;color:#c9cbcf;">Pipeline Mono</div>
<div class="t" style="left:150.3px;width:200px;text-align:center;top:374.49px;font-size:9.5px;color:#e2e2e2;font-weight:bold;letter-spacing:0.1px">FX</div>
<div class="a" style="left:242.3px;top:393.02000000000004px;width:15.8px;height:15.8px;background:#56575a;border-radius:1px"></div>
<div class="t" style="left:263.6px;top:395.41px;font-size:12.1px;color:#c9cbcf;">Pipeline Stereo</div>
<div class="t" style="left:150.3px;width:200px;text-align:center;top:396.16px;font-size:9.5px;color:#e2e2e2;font-weight:bold;letter-spacing:0.1px">FX</div>
<div class="a" style="left:242.3px;top:414.69px;width:15.8px;height:15.8px;background:#56575a;border-radius:1px"></div>
<div class="t" style="left:263.6px;top:417.08px;font-size:12.1px;color:#c9cbcf;">Pro EQ</div>
<div class="t" style="left:150.3px;width:200px;text-align:center;top:417.83px;font-size:9.5px;color:#e2e2e2;font-weight:bold;letter-spacing:0.1px">FX</div>
<div class="a" style="left:242.3px;top:436.36px;width:15.8px;height:15.8px;background:#56575a;border-radius:1px"></div>
<div class="t" style="left:263.6px;top:438.75px;font-size:12.1px;color:#c9cbcf;">RedlightDist</div>
<div class="t" style="left:150.3px;width:200px;text-align:center;top:439.5px;font-size:9.5px;color:#e2e2e2;font-weight:bold;letter-spacing:0.1px">FX</div>
<div class="a" style="left:242.3px;top:458.03000000000003px;width:15.8px;height:15.8px;background:#56575a;border-radius:1px"></div>
<div class="t" style="left:263.6px;top:460.42px;font-size:12.1px;color:#c9cbcf;">Room Reverb</div>
<div class="t" style="left:150.3px;width:200px;text-align:center;top:461.17px;font-size:9.5px;color:#e2e2e2;font-weight:bold;letter-spacing:0.1px">FX</div>
<div class="a" style="left:242.3px;top:479.7px;width:15.8px;height:15.8px;background:#56575a;border-radius:1px"></div>
<div class="t" style="left:263.6px;top:482.09px;font-size:12.1px;color:#c9cbcf;">Rotor</div>
<div class="t" style="left:150.3px;width:200px;text-align:center;top:482.84px;font-size:9.5px;color:#e2e2e2;font-weight:bold;letter-spacing:0.1px">FX</div>
<div class="a" style="left:242.3px;top:501.37px;width:15.8px;height:15.8px;background:#56575a;border-radius:1px"></div>
<div class="t" style="left:263.6px;top:503.76px;font-size:12.1px;color:#c9cbcf;">Scope</div>
<div class="t" style="left:150.3px;width:200px;text-align:center;top:504.51px;font-size:9.5px;color:#e2e2e2;font-weight:bold;letter-spacing:0.1px">FX</div>
<div class="a" style="left:242.3px;top:523.04px;width:15.8px;height:15.8px;background:#56575a;border-radius:1px"></div>
<div class="t" style="left:263.6px;top:525.43px;font-size:12.1px;color:#c9cbcf;">Spectrum Meter</div>
<div class="t" style="left:150.3px;width:200px;text-align:center;top:526.18px;font-size:9.5px;color:#e2e2e2;font-weight:bold;letter-spacing:0.1px">FX</div>
<div class="a" style="left:242.3px;top:544.71px;width:15.8px;height:15.8px;background:#56575a;border-radius:1px"></div>
<div class="t" style="left:263.6px;top:547.1px;font-size:12.1px;color:#c9cbcf;">Splitter</div>
<div class="t" style="left:150.3px;width:200px;text-align:center;top:547.85px;font-size:9.5px;color:#e2e2e2;font-weight:bold;letter-spacing:0.1px">FX</div>
<div class="a" style="left:242.3px;top:566.3799999999999px;width:15.8px;height:15.8px;background:#56575a;border-radius:1px"></div>
<div class="t" style="left:263.6px;top:568.77px;font-size:12.1px;color:#c9cbcf;">Tone Generator</div>
<div class="t" style="left:150.3px;width:200px;text-align:center;top:569.52px;font-size:9.5px;color:#e2e2e2;font-weight:bold;letter-spacing:0.1px">FX</div>
<div class="a" style="left:242.3px;top:588.05px;width:15.8px;height:15.8px;background:#56575a;border-radius:1px"></div>
<div class="t" style="left:263.6px;top:590.44px;font-size:12.1px;color:#c9cbcf;">Tricomp</div>
<div class="t" style="left:150.3px;width:200px;text-align:center;top:591.19px;font-size:9.5px;color:#e2e2e2;font-weight:bold;letter-spacing:0.1px">FX</div>
<div class="a" style="left:242.3px;top:609.72px;width:15.8px;height:15.8px;background:#56575a;border-radius:1px"></div>
<div class="t" style="left:263.6px;top:612.11px;font-size:12.1px;color:#c9cbcf;">Tuner</div>
<div class="t" style="left:150.3px;width:200px;text-align:center;top:612.86px;font-size:9.5px;color:#e2e2e2;font-weight:bold;letter-spacing:0.1px">FX</div>
<div class="a" style="left:194px;top:628.7px;width:236.8px;height:22.1px;background:#2f73cc;"></div>
<div class="a" style="left:242.3px;top:631.39px;width:15.8px;height:15.8px;background:#44474d;border-radius:1px"></div>
<div class="t" style="left:263.6px;top:633.78px;font-size:12.1px;color:#f0f3f8;">Vocoder</div>
<div class="t" style="left:150.3px;width:200px;text-align:center;top:634.53px;font-size:9.5px;color:#e2e2e2;font-weight:bold;letter-spacing:0.1px">FX</div>
<div class="a" style="left:242.3px;top:653.06px;width:15.8px;height:15.8px;background:#56575a;border-radius:1px"></div>
<div class="t" style="left:263.6px;top:655.45px;font-size:12.1px;color:#c9cbcf;">X-Trem</div>
<div class="t" style="left:150.3px;width:200px;text-align:center;top:656.2px;font-size:9.5px;color:#e2e2e2;font-weight:bold;letter-spacing:0.1px">FX</div>
<div class="a" style="left:221.5px;top:678.4300000000001px;width:0;height:0;border-top:4.5px solid transparent;border-bottom:4.5px solid transparent;border-left:4.5px solid #d0d2d5"></div>
<svg class="a" style="left:229px;top:676.9300000000001px" width="17" height="13" viewBox="0 0 17 13"><path d="M1,1.5 L6,1.5 L7.5,3 L15.5,3 L15.5,11.5 L1,11.5 Z" fill="#c9cbce"/></svg>
<div class="t" style="left:251px;top:677.12px;font-size:12.1px;color:#c2c4c8;">Sonimus</div>
<svg class="a" style="left:318px;top:635px" width="16" height="24" viewBox="0 0 16 24"><path d="M2,1.5 L2,17 L5.6,13.6 L8.4,20.2 L11,19 L8.3,12.6 L13,12.6 Z" fill="#ffffff" stroke="#1a1a1a" stroke-width="1"/></svg>
</body></html>
